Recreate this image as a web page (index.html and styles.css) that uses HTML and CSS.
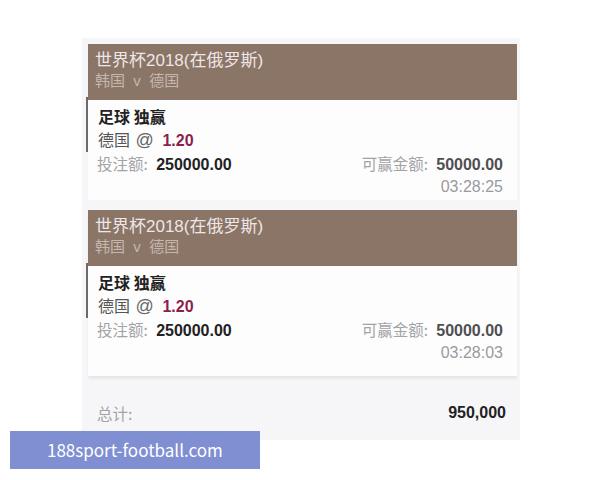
FILE: index.html
```html
<!DOCTYPE html>
<html lang="zh-CN">
<head>
    <meta charset="UTF-8">
    <title>投注记录</title>
    <link rel="stylesheet" href="styles.css">
</head>
<body>
    <div class="panel">
        <div class="bet">
            <div class="bet-head">
                <div class="league">世界杯2018(在俄罗斯)</div>
                <div class="match">韩国 &nbsp;v&nbsp; 德国</div>
            </div>
            <div class="bet-body">
                <div class="pick">
                    <div class="market">足球 独赢</div>
                    <div class="sel">德国 <span class="at">@</span> <span class="odds">1.20</span></div>
                </div>
                <div class="amounts">
                    <span><span class="label">投注额:</span> <b class="stake">250000.00</b></span>
                    <span><span class="label">可赢金额:</span> <b class="win">50000.00</b></span>
                </div>
                <div class="time">03:28:25</div>
            </div>
        </div>

        <div class="bet">
            <div class="bet-head">
                <div class="league">世界杯2018(在俄罗斯)</div>
                <div class="match">韩国 &nbsp;v&nbsp; 德国</div>
            </div>
            <div class="bet-body">
                <div class="pick">
                    <div class="market">足球 独赢</div>
                    <div class="sel">德国 <span class="at">@</span> <span class="odds">1.20</span></div>
                </div>
                <div class="amounts">
                    <span><span class="label">投注额:</span> <b class="stake">250000.00</b></span>
                    <span><span class="label">可赢金额:</span> <b class="win">50000.00</b></span>
                </div>
                <div class="time">03:28:03</div>
            </div>
        </div>

        <div class="total">
            <span class="label">总计:</span>
            <b>950,000</b>
        </div>
    </div>

    <div class="mark">188sport-football.com</div>
</body>
</html>
```

FILE: styles.css
```css
body {
    margin: 0;
    background: #ffffff;
    font-family: "Liberation Sans", "Noto Sans CJK SC", sans-serif;
    width: 600px;
    height: 480px;
    position: relative;
}

.panel {
    margin: 38px 0 0 82px;
    width: 438px;
    height: 402px;
    box-sizing: border-box;
    background: #f6f6f9;
    padding: 6px 3px 0 6px;
    display: flex;
    flex-direction: column;
    gap: 10px;
}

.bet {
    background: #fdfdfe;
}

.bet + .bet {
    box-shadow: 0 3px 2px rgba(0, 0, 0, 0.06);
}

.bet-head {
    background: #8a7567;
    height: 56px;
    box-sizing: border-box;
    padding: 6px 8px 0 7px;
    font-family: "Liberation Sans", "Noto Sans CJK SC", sans-serif;
}

.league {
    color: #efe6e6;
    font-size: 17px;
    line-height: 21px;
}

.match {
    color: #c6b6ad;
    font-size: 15px;
    line-height: 19px;
}

.bet-body {
    padding: 0 14px 2px 0;
}

.bet + .bet .bet-body {
    padding-bottom: 12px;
}

.pick {
    border-left: 2px solid #6f6a68;
    margin-left: -2px;
    padding: 8px 0 0 10px;
    height: 47px;
    margin-top: -3px;
}

.market {
    font-family: "Noto Sans CJK SC", sans-serif;
    font-weight: bold;
    font-size: 16px;
    line-height: 22px;
    color: #222;
}

.sel {
    font-family: "Noto Sans CJK SC", sans-serif;
    font-size: 16px;
    line-height: 25px;
    color: #555;
}

.at {
    font-family: "Liberation Sans", sans-serif;
    font-size: 18px;
    color: #666;
    margin-left: 2px;
}

.odds {
    font-family: "Liberation Sans", sans-serif;
    font-weight: bold;
    font-size: 16px;
    color: #8b1f50;
    margin-left: 5px;
}

.amounts {
    display: flex;
    justify-content: space-between;
    padding-left: 9px;
    line-height: 22px;
    font-size: 15.5px;
}

.label {
    font-family: "Noto Sans CJK SC", sans-serif;
    color: #a3a3a6;
    margin-right: 4px;
}

.stake {
    color: #222;
    font-size: 16px;
}

.win {
    color: #4f4f52;
    font-size: 16px;
}

.time {
    text-align: right;
    color: #9a9a9c;
    font-size: 16px;
    line-height: 22px;
}

.total {
    display: flex;
    justify-content: space-between;
    align-items: center;
    padding: 16px 11px 0 9px;
    font-size: 15.5px;
}

.total b {
    color: #222;
    font-size: 16px;
}

.mark {
    position: absolute;
    left: 10px;
    top: 431px;
    width: 250px;
    height: 38px;
    background: #7f8fd1;
    color: #fff;
    font-family: "Noto Sans CJK SC", sans-serif;
    font-size: 17px;
    line-height: 38px;
    padding-left: 37px;
    box-sizing: border-box;
}
```
